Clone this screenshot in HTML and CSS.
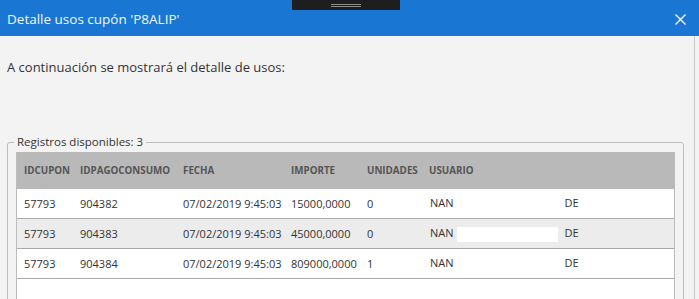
FILE: index.html
```html
<!DOCTYPE html>
<html lang="es">
<head>
<meta charset="utf-8">
<title>Detalle usos cupón</title>
<link rel="stylesheet" href="styles.css">
</head>
<body>
<div class="window">
  <header class="titlebar">
    <span class="title">Detalle usos cupón 'P8ALIP'</span>
    <svg class="close" width="11" height="11" viewBox="0 0 11 11"><path d="M0.5 0.5L10.5 10.5M10.5 0.5L0.5 10.5" stroke="#fff" stroke-width="1.4" fill="none"/></svg>
    <div class="grip"><span class="grip-line"></span><span class="grip-line"></span></div>
  </header>
  <main class="content">
    <p class="intro">A continuación se mostrará el detalle de usos:</p>
    <fieldset class="group">
      <legend class="legend">Registros disponibles: 3</legend>
      <div class="grid">
        <div class="row head">
          <span>IDCUPON</span><span>IDPAGOCONSUMO</span><span>FECHA</span><span>IMPORTE</span><span>UNIDADES</span><span>USUARIO</span>
        </div>
        <div class="row">
          <span>57793</span><span>904382</span><span>07/02/2019 9:45:03</span><span>15000,0000</span><span>0</span><span class="user">NAN<i class="redact"></i>DE</span>
        </div>
        <div class="row alt">
          <span>57793</span><span>904383</span><span>07/02/2019 9:45:03</span><span>45000,0000</span><span>0</span><span class="user">NAN<i class="redact"></i>DE</span>
        </div>
        <div class="row">
          <span>57793</span><span>904384</span><span>07/02/2019 9:45:03</span><span>809000,0000</span><span>1</span><span class="user">NAN<i class="redact"></i>DE</span>
        </div>
      </div>
    </fieldset>
  </main>
</div>
</body>
</html>
```
FILE: styles.css
```css
* { box-sizing: border-box; }
html, body { margin: 0; padding: 0; }
body {
  width: 699px;
  height: 299px;
  overflow: hidden;
  background: #f3f3f3;
  font-family: "Open Sans", "Noto Sans", sans-serif;
  color: #222;
}
.window { width: 699px; height: 299px; display: flex; flex-direction: column; overflow: hidden; }
.titlebar {
  position: relative;
  height: 36px;
  flex: none;
  background: #1976d2;
  display: flex;
  align-items: center;
  padding: 2px 13px 0 7px;
}
.title { color: #f2f6fc; font-size: 13.5px; flex: 1; }
.close { display: block; }
.grip {
  position: absolute;
  left: 292px;
  top: 0;
  width: 108px;
  height: 10px;
  background: #1e1e1e;
  display: flex;
  flex-direction: column;
  align-items: center;
  padding-top: 4px;
  gap: 1px;
}
.grip-line { display: block; width: 30px; height: 1px; background: #8a8a8a; }
.content {
  flex: 1;
  min-height: 0;
  width: 695px;
  border-right: 1px solid #c9c9c9;
  padding: 0 10px 0 7px;
  overflow: hidden;
}
.intro { margin: 22px 0 0; font-size: 13px; color: #333; line-height: 18px; }
.group {
  margin: 59px 0 0;
  border: 1px solid #bdbdbd;
  border-radius: 3px;
  padding: 3px 8px 0 9px;
  height: 180px;
}
.legend { font-size: 11.5px; color: #333; padding: 0 3px; margin-left: -3px; line-height: 14px; }
.grid {
  background: #fff;
  border-left: 1px solid #bcbcbc;
  border-right: 1px solid #bcbcbc;
  height: 150px;
  margin-left: -1px;
}
.row {
  display: grid;
  grid-template-columns: 56px 103px 108px 76px 62px 1fr;
  height: 30px;
  align-items: center;
  border-bottom: 1px solid #a9a9a9;
  font-size: 11px;
  color: #333;
  padding-left: 7px;
}
.row.head {
  height: 37px;
  background: #b9b9b9;
  border-bottom: none;
  font-size: 9.8px;
  font-weight: 700;
  color: #555;
}
.row.alt { background: #ececec; }
.user { white-space: nowrap; padding-left: 1px; }
.redact { display: inline-block; width: 101px; height: 15px; background: #fff; vertical-align: middle; margin: 0 7px 0 3px; }
```
